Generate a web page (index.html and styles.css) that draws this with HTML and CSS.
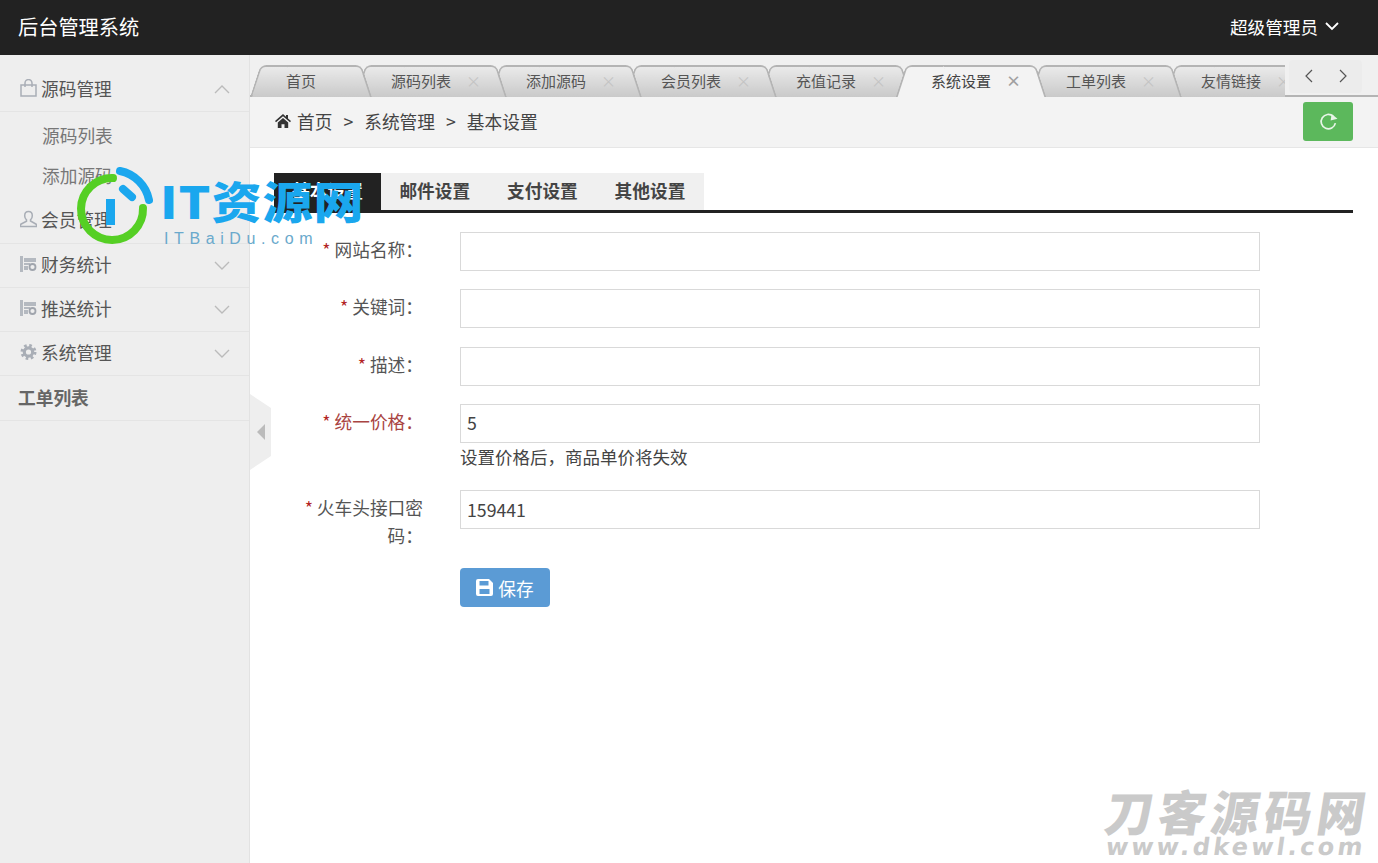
FILE: index.html
```html
<!DOCTYPE html>
<html lang="zh-CN">
<head>
  <meta charset="UTF-8">
  <title>后台管理系统</title>
  <link rel="stylesheet" href="styles.css">
</head>
<body>
  <header class="topbar">
    <div class="brand">后台管理系统</div>
    <div class="user">超级管理员
      <svg class="user-caret" width="14" height="9" viewBox="0 0 14 9"><polyline points="1,1 7,7 13,1"/></svg>
    </div>
  </header>

  <div class="layout">
    <!-- 左侧菜单 -->
    <aside class="sidebar">
      <div class="menu-row">
        <svg class="menu-icon" width="17" height="18" viewBox="0 0 17 18"><path class="ico-line" d="M1 6h15v11H1zM5 8V4a3.500 3.500 0 0 1 7 0v4"/></svg>
        <span>源码管理</span>
        <svg class="menu-caret" width="16" height="9" viewBox="0 0 16 9"><polyline points="1,8 8,1 15,8"/></svg>
      </div>
      <div class="submenu">
        <a class="submenu-item">源码列表</a>
        <a class="submenu-item">添加源码</a>
      </div>
      <div class="menu-row menu-row-member">
        <svg class="menu-icon" width="17" height="18" viewBox="0 0 17 18"><path class="ico-line" d="M8.500 1.500c-2.500 0-3.800 2-3.800 4.200 0 1.800.8 3.300 1.800 4.200v1.300L1.200 14c-.5.300-.7.700-.7 1.300v1.200h16v-1.200c0-.6-.2-1-.7-1.300l-5.300-3V9.900c1-.9 1.800-2.400 1.800-4.200 0-2.200-1.300-4.200-3.800-4.200z"/></svg>
        <span>会员管理</span>
      </div>
      <div class="menu-row">
        <svg class="menu-icon" width="17" height="18" viewBox="0 0 17 18"><path class="ico-fill" d="M0 1h3v16H0zM4 3h12v4H4zM4 8h6v2H4zM4 11h4v4H4z"/><circle class="ico-clock" cx="12.500" cy="12" r="3"/></svg>
        <span>财务统计</span>
        <svg class="menu-caret" width="16" height="9" viewBox="0 0 16 9"><polyline points="1,1 8,8 15,1"/></svg>
      </div>
      <div class="menu-row">
        <svg class="menu-icon" width="17" height="18" viewBox="0 0 17 18"><path class="ico-fill" d="M0 1h3v16H0zM4 3h12v4H4zM4 8h6v2H4zM4 11h4v4H4z"/><circle class="ico-clock" cx="12.500" cy="12" r="3"/></svg>
        <span>推送统计</span>
        <svg class="menu-caret" width="16" height="9" viewBox="0 0 16 9"><polyline points="1,1 8,8 15,1"/></svg>
      </div>
      <div class="menu-row">
        <svg class="menu-icon" width="17" height="18" viewBox="0 0 17 18"><circle class="ico-teeth" cx="8.500" cy="9" r="6.500"/><circle class="ico-gear" cx="8.500" cy="9" r="4.200"/></svg>
        <span>系统管理</span>
        <svg class="menu-caret" width="16" height="9" viewBox="0 0 16 9"><polyline points="1,1 8,8 15,1"/></svg>
      </div>
      <div class="menu-row menu-row-bold"><span>工单列表</span></div>
    </aside>

    <main class="main">
      <div class="collapse-handle"><span class="collapse-arrow"></span></div>

      <!-- 顶部标签 -->
      <div class="tabstrip">
        <div class="tabs">
          <div class="tab">首页</div>
          <div class="tab">源码列表<i class="tab-close">×</i></div>
          <div class="tab">添加源码<i class="tab-close">×</i></div>
          <div class="tab">会员列表<i class="tab-close">×</i></div>
          <div class="tab">充值记录<i class="tab-close">×</i></div>
          <div class="tab tab-active">系统设置<i class="tab-close">×</i></div>
          <div class="tab">工单列表<i class="tab-close">×</i></div>
          <div class="tab">友情链接<i class="tab-close">×</i></div>
        </div>
        <div class="tab-nav">
          <svg width="9" height="14" viewBox="0 0 9 14"><polyline points="8,1 2,7 8,13"/></svg>
          <svg width="9" height="14" viewBox="0 0 9 14"><polyline points="1,1 7,7 1,13"/></svg>
        </div>
      </div>

      <div class="crumbbar">
        <svg class="home-icon" width="16" height="14" viewBox="0 0 16 14"><path d="M8 0 0 7l1 1.200L8 2.200l7 6L16 7l-3-2.600V1h-2v1.700zM2.800 8.600V14h3.700v-3.700h3V14h3.700V8.600L8 4.100z"/></svg>
        <span>首页</span><span class="crumb-sep">&gt;</span>
        <span>系统管理</span><span class="crumb-sep">&gt;</span>
        <span>基本设置</span>
        <button class="refresh-btn" type="button">
          <svg width="19" height="19" viewBox="0 0 18 18"><path class="refresh-arc" d="M15.500 10.500A6.800 6.800 0 1 1 13.500 4.200"/><path class="refresh-head" d="M12 2 17.500 6.500 11 8z"/></svg>
        </button>
      </div>

      <div class="content">
        <div class="subtabs">
          <div class="subtab subtab-active">基本设置</div>
          <div class="subtab">邮件设置</div>
          <div class="subtab">支付设置</div>
          <div class="subtab">其他设置</div>
        </div>

        <form class="setting-form">
          <div class="form-row">
            <label class="form-label"><em>*</em> 网站名称：</label>
            <div class="form-field"><input class="form-input" type="text"></div>
          </div>
          <div class="form-row">
            <label class="form-label"><em>*</em> 关键词：</label>
            <div class="form-field"><input class="form-input" type="text"></div>
          </div>
          <div class="form-row">
            <label class="form-label"><em>*</em> 描述：</label>
            <div class="form-field"><input class="form-input" type="text"></div>
          </div>
          <div class="form-row">
            <label class="form-label form-label-error"><em>*</em> 统一价格：</label>
            <div class="form-field">
              <input class="form-input" type="text" value="5">
              <p class="form-help">设置价格后，商品单价将失效</p>
            </div>
          </div>
          <div class="form-row form-row-tall">
            <label class="form-label"><em>*</em> 火车头接口密码：</label>
            <div class="form-field"><input class="form-input" type="text" value="159441"></div>
          </div>
          <div class="form-actions">
            <button class="save-btn" type="button">
              <svg width="17" height="17" viewBox="0 0 17 17"><path d="M2 0h11l4 4v11a2 2 0 0 1-2 2H2a2 2 0 0 1-2-2V2a2 2 0 0 1 2-2zm1.500 2v4.500h9V2zM3.500 10v5h10v-5z" fill-rule="evenodd"/></svg>
              保存
            </button>
          </div>
        </form>
      </div>
    </main>
  </div>

  <!-- 水印 -->
  <div class="mark-logo">
    <svg class="mark-ring" width="90" height="90" viewBox="0 0 90 90">
      <rect class="ring-bar" x="36" y="39" width="9" height="26"/>
      <path class="ring-green" d="M43 18A31 31 0 1 0 73 48"/>
      <path class="ring-blue" d="M50 11A37 37 0 0 1 79 40"/>
      <path class="ring-blue" d="M53 29 62 37"/>
    </svg>
    <div class="mark-title">IT资源网</div>
    <div class="mark-sub">ITBaiDu.com</div>
  </div>
  <div class="mark-corner">
    <div class="corner-title">刀客源码网</div>
    <div class="corner-url">www.dkewl.com</div>
  </div>
</body>
</html>
```

FILE: styles.css
```css
* {
  box-sizing: border-box;
}
html, body {
  height: 100%;
}
body {
  margin: 0;
  font-family: "Noto Sans CJK SC", "Noto Sans", sans-serif;
  font-size: 17.7px;
  color: #444;
  background-color: #fff;
  overflow: hidden;
  position: relative;
}
.topbar {
  height: 55px;
  background-color: #222;
  color: #fff;
  display: flex;
  justify-content: space-between;
  align-items: center;
  padding: 0 39px 2px 18px;
}
.brand {
  font-size: 20.2px;
}
.user {
  display: flex;
  align-items: center;
  gap: 7px;
  font-size: 17.6px;
}
.user-caret polyline {
  fill: none;
  stroke: #fff;
  stroke-width: 1.8;
}
.layout {
  display: flex;
  height: 808px;
}

/* 左侧菜单 */
.sidebar {
  width: 250px;
  flex: none;
  background-color: #eee;
  border-right: 1px solid #e2e2e2;
  padding-top: 13px;
}
.menu-row {
  height: 44px;
  display: flex;
  align-items: center;
  padding: 0 19px 3px 20px;
  border-bottom: 1px solid #e4e4e4;
  color: #555;
}
.menu-row-member {
  padding-bottom: 5px;
}
.menu-icon {
  margin-right: 4px;
  flex: none;
}
.ico-line {
  fill: none;
  stroke: #a9aeb6;
  stroke-width: 1.5;
}
.ico-fill {
  fill: #b4b9c0;
}
.ico-clock {
  fill: #eee;
  stroke: #a0a5ad;
  stroke-width: 1.8;
}
.ico-teeth {
  fill: none;
  stroke: #a9aeb6;
  stroke-width: 3;
  stroke-dasharray: 2.550 2.550;
}
.ico-gear {
  fill: none;
  stroke: #a9aeb6;
  stroke-width: 3.200;
}
.menu-caret {
  margin: 2px 0 0 auto;
}
.menu-caret polyline {
  fill: none;
  stroke: #bbb;
  stroke-width: 1.4;
}
.menu-row-bold {
  font-weight: 700;
  color: #666;
  padding-left: 18px;
  padding-bottom: 2px;
  height: 45px;
}
.submenu {
  padding: 4px 0;
}
.submenu-item {
  display: block;
  height: 40px;
  line-height: 38px;
  padding-left: 42px;
  color: #777;
}

/* 顶部标签 */
.main {
  flex: 1;
  min-width: 0;
  position: relative;
}
.tabstrip {
  height: 42px;
  background-color: #f0f0f0;
  border-bottom: 2px solid #b4b4b4;
  display: flex;
  padding-right: 16px;
}
.tabs {
  flex: 1;
  min-width: 0;
  height: 42px;
  padding-top: 10px;
  display: flex;
  overflow: hidden;
}
.tab {
  position: relative;
  flex: none;
  height: 32px;
  line-height: 32px;
  padding: 0 56px 0 36px;
  margin-right: -17px;
  font-size: 15px;
  color: #555;
}
.tab::before,
.tab::after {
  content: "";
  position: absolute;
  top: 0;
  bottom: 0;
  width: 60%;
  z-index: -1;
  background: linear-gradient(#eaeaea, #c9c9c9);
  border-top: 2px solid #b4b4b4;
  transform-origin: bottom;
}
.tab::before {
  left: 0;
  border-left: 2px solid #b4b4b4;
  border-top-left-radius: 6px;
  transform: skewX(-18deg);
}
.tab::after {
  right: 0;
  border-right: 2px solid #b4b4b4;
  border-top-right-radius: 6px;
  transform: skewX(18deg);
}
/* 前面的标签压住后面的 */
.tab:nth-child(1) { z-index: 8; }
.tab:nth-child(2) { z-index: 7; }
.tab:nth-child(3) { z-index: 6; }
.tab:nth-child(4) { z-index: 5; }
.tab:nth-child(5) { z-index: 4; }
.tab:nth-child(6) { z-index: 9; }
.tab:nth-child(7) { z-index: 2; }
.tab:nth-child(8) { z-index: 1; }
.tab-active {
  height: 34px;
  color: #444;
}
.tab-active::before,
.tab-active::after {
  background: #f3f3f3;
}
.tab-close {
  position: absolute;
  right: 26px;
  top: 0;
  font-style: normal;
  font-size: 15px;
  color: #c4c4c4;
}
.tab-active .tab-close {
  color: #a0a0a0;
  font-weight: 700;
}
.tab-nav {
  flex: none;
  width: 73px;
  height: 33px;
  margin: 5px 0 0 4px;
  background-color: #ececec;
  border-radius: 4px;
  display: flex;
  justify-content: space-between;
  align-items: center;
  padding: 0 14px 2px 15px;
}
.tab-nav polyline {
  fill: none;
  stroke: #555;
  stroke-width: 1.2;
}

/* 面包屑 */
.crumbbar {
  height: 51px;
  background-color: #f3f3f3;
  border-bottom: 1px solid #e6e6e6;
  display: flex;
  align-items: center;
  padding: 0 25px 2px 25px;
  color: #444;
}
.home-icon {
  margin-right: 6px;
  fill: #333;
}
.crumb-sep {
  margin: 0 11px;
}
.refresh-btn {
  margin: 0 0 0 auto;
  width: 50px;
  height: 39px;
  border: none;
  border-radius: 3px;
  background-color: #5cb85c;
  display: flex;
  align-items: center;
  justify-content: center;
}
.refresh-arc {
  fill: none;
  stroke: #e8f5e8;
  stroke-width: 1.6;
}
.refresh-head {
  fill: #e8f5e8;
}

.content {
  padding: 25px 25px 0 24px;
}
.subtabs {
  display: flex;
  border-bottom: 3px solid #222;
  height: 40px;
}
.subtab {
  height: 37px;
  width: 107.600px;
  line-height: 35px;
  text-align: center;
  font-weight: 700;
  background-color: #f0f0f0;
  color: #444;
}
.subtab-active {
  width: 107px;
  background-color: #222;
  color: #fff;
}

/* 表单 */
.setting-form {
  padding-top: 19px;
}
.form-row {
  display: flex;
  margin-bottom: 18.300px;
}
.form-row-tall {
  margin-bottom: 19px;
}
.form-label {
  width: 152px;
  flex: none;
  padding: 3px 3px 0 20px;
  margin-right: 34px;
  line-height: 28px;
  text-align: right;
  color: #555;
}
.form-label em {
  font-style: normal;
  color: #b22222;
}
.form-label-error {
  color: #a94442;
}
.form-field {
  width: 800px;
}
.form-input {
  display: block;
  width: 100%;
  height: 39px;
  border: 1px solid #d9d9d9;
  padding: 0 6px 2px;
  font: inherit;
  color: #444;
  background-color: #fff;
}
.form-help {
  margin: 0;
  height: 29px;
  line-height: 27px;
  font-size: 17.500px;
  color: #444;
}
.form-actions {
  padding-left: 186px;
}
.save-btn {
  width: 90px;
  height: 39px;
  border: none;
  border-radius: 4px;
  background-color: #5b9bd5;
  color: #fff;
  font: inherit;
  display: flex;
  align-items: center;
  justify-content: center;
  gap: 5px;
}
.save-btn svg {
  fill: #fff;
}

/* 折叠把手 */
.collapse-handle {
  position: absolute;
  left: 0;
  top: 339px;
  width: 21px;
  height: 76px;
  background-color: #eee;
  clip-path: polygon(0 0, 100% 14px, 100% 62px, 0 100%);
  display: flex;
  align-items: center;
  padding-left: 7px;
}
.collapse-arrow {
  width: 0;
  height: 0;
  border-style: solid;
  border-width: 8px 8px 8px 0;
  border-color: transparent #bbb transparent transparent;
}

/* 水印 */
.mark-logo {
  position: absolute;
  left: 70px;
  top: 160px;
  width: 300px;
  height: 90px;
}
.mark-ring {
  position: absolute;
  left: 0;
  top: 0;
}
.ring-green {
  fill: none;
  stroke: #55cf24;
  stroke-width: 8;
  stroke-linecap: round;
}
.ring-blue {
  fill: none;
  stroke: #1aa7ee;
  stroke-width: 8;
  stroke-linecap: round;
}
.ring-bar {
  fill: #1aa7ee;
}
.mark-title {
  position: absolute;
  left: 90px;
  top: 11px;
  font-size: 50px;
  line-height: 66px;
  font-weight: 900;
  color: #1aa7ee;
  white-space: nowrap;
  letter-spacing: 1px;
  transform: scaleY(0.88);
  transform-origin: top;
}
.mark-sub {
  position: absolute;
  left: 94px;
  top: 69px;
  font-family: "Liberation Sans", sans-serif;
  font-size: 16px;
  line-height: 20px;
  letter-spacing: 5.600px;
  color: #6aa9cc;
  white-space: nowrap;
}
.mark-corner {
  position: absolute;
  right: 12px;
  bottom: 4px;
  width: 260px;
  color: #cacaca;
  font-weight: 900;
}
.corner-title {
  font-size: 48px;
  line-height: 44px;
  letter-spacing: 5px;
  margin-bottom: 3px;
  transform: skewX(-9deg);
  white-space: nowrap;
}
.corner-url {
  font-family: "DejaVu Sans", sans-serif;
  font-size: 24px;
  line-height: 24px;
  font-weight: 700;
  letter-spacing: 3.200px;
  transform: skewX(-8deg);
  white-space: nowrap;
}
```
